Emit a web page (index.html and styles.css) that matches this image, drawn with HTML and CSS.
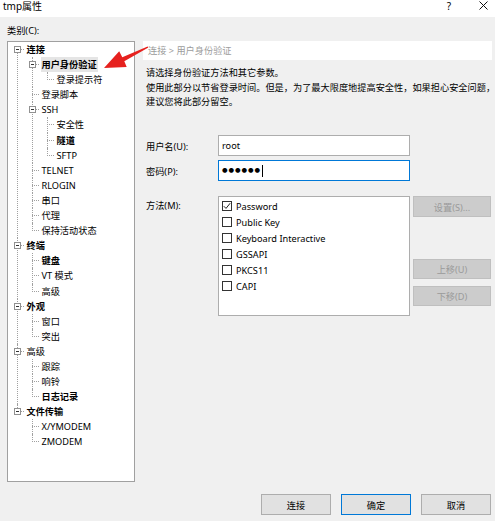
FILE: index.html
```html
<!DOCTYPE html>
<html lang="zh-CN">
<head>
    <meta charset="UTF-8">
    <title>tmp属性</title>
    <link rel="stylesheet" href="styles.css">
</head>
<body>
<div class="window">
    <div class="titlebar">
        <span class="title">tmp属性</span>
        <span class="help">?</span>
        <svg class="close" width="9" height="9" viewBox="0 0 9 9">
            <path d="M0.5 0.5L8.5 8.5M8.5 0.5L0.5 8.5" stroke="#111" stroke-width="1"/>
        </svg>
    </div>

    <div class="content">
        <div class="caption">类别(C):</div>

        <div class="main">
            <div class="tree">
                <ul>
                    <li><i class="exp"></i><span class="node b">连接</span>
                        <ul>
                            <li><i class="exp"></i><span class="node b"><span class="sel">用户身份验证</span></span>
                                <ul>
                                    <li><span class="node">登录提示符</span></li>
                                </ul>
                            </li>
                            <li><span class="node">登录脚本</span></li>
                            <li><i class="exp"></i><span class="node">SSH</span>
                                <ul>
                                    <li><span class="node">安全性</span></li>
                                    <li><span class="node b">隧道</span></li>
                                    <li><span class="node">SFTP</span></li>
                                </ul>
                            </li>
                            <li><span class="node">TELNET</span></li>
                            <li><span class="node">RLOGIN</span></li>
                            <li><span class="node">串口</span></li>
                            <li><span class="node">代理</span></li>
                            <li><span class="node">保持活动状态</span></li>
                        </ul>
                    </li>
                    <li><i class="exp"></i><span class="node b">终端</span>
                        <ul>
                            <li><span class="node b">键盘</span></li>
                            <li><span class="node">VT 模式</span></li>
                            <li><span class="node">高级</span></li>
                        </ul>
                    </li>
                    <li><i class="exp"></i><span class="node b">外观</span>
                        <ul>
                            <li><span class="node">窗口</span></li>
                            <li><span class="node">突出</span></li>
                        </ul>
                    </li>
                    <li><i class="exp"></i><span class="node">高级</span>
                        <ul>
                            <li><span class="node">跟踪</span></li>
                            <li><span class="node">响铃</span></li>
                            <li><span class="node b">日志记录</span></li>
                        </ul>
                    </li>
                    <li><i class="exp"></i><span class="node b">文件传输</span>
                        <ul>
                            <li><span class="node">X/YMODEM</span></li>
                            <li><span class="node">ZMODEM</span></li>
                        </ul>
                    </li>
                </ul>
            </div>

            <div class="page">
                <div class="crumb">连接 &gt; 用户身份验证</div>
                <div class="intro">
                    <p>请选择身份验证方法和其它参数。</p>
                    <p>使用此部分以节省登录时间。但是，为了最大限度地提高安全性，如果担心安全问题，<br>建议您将此部分留空。</p>
                </div>

                <div class="row first">
                    <label class="lbl">用户名(U):</label>
                    <div class="input">root</div>
                </div>
                <div class="row">
                    <label class="lbl">密码(P):</label>
                    <div class="input focus"><span class="dots">●●●●●●</span><span class="caret"></span></div>
                </div>

                <div class="row methods">
                    <label class="lbl">方法(M):</label>
                    <div class="list">
                        <div class="opt">
                            <span class="box">
                                <svg width="8" height="8" viewBox="0 0 8 8"><path d="M0.8 4.2L3 6.4L7.2 1.2" fill="none" stroke="#222" stroke-width="1"/></svg>
                            </span>Password
                        </div>
                        <div class="opt"><span class="box"></span>Public Key</div>
                        <div class="opt"><span class="box"></span>Keyboard Interactive</div>
                        <div class="opt"><span class="box"></span>GSSAPI</div>
                        <div class="opt"><span class="box"></span>PKCS11</div>
                        <div class="opt"><span class="box"></span>CAPI</div>
                    </div>
                    <div class="side">
                        <button class="btn" disabled>设置(S)...</button>
                        <button class="btn up" disabled>上移(U)</button>
                        <button class="btn down" disabled>下移(D)</button>
                    </div>
                </div>
            </div>
        </div>

        <div class="footer">
            <button class="button">连接</button>
            <button class="button default">确定</button>
            <button class="button">取消</button>
        </div>
    </div>

    <!-- red pointer drawn over the tree -->
    <svg class="pointer" width="495" height="521" viewBox="0 0 495 521">
        <polygon points="104,68 126.7,67 124.3,61.2 148.4,47.6 147.6,46.4 122.3,57.3 119.2,51.2" fill="#e6211e"/>
    </svg>
</div>
</body>
</html>
```

FILE: styles.css
```css
* {
    box-sizing: border-box;
}

body {
    margin: 0;
    font: 9.2px "Noto Sans", "Noto Sans CJK SC", sans-serif;
    color: #000;
}

.window {
    position: relative;
    width: 495px;
    height: 521px;
    background: #f0f0f0;
    overflow: hidden;
}

/* title bar */
.titlebar {
    display: flex;
    align-items: flex-start;
    height: 17px;
    background: #fff;
    padding-left: 3px;
}

.title {
    flex: 1;
    font-size: 10px;
    line-height: 12px;
}

.help {
    font-size: 10px;
    line-height: 12px;
    margin-right: 28px;
}

.close {
    margin-top: 1px;
    margin-right: 7px;
}

.content {
    padding: 0 3px 0 7px;
}

.caption {
    height: 14px;
    line-height: 14px;
    margin: 7px 0 3px;
}

.main {
    display: flex;
    gap: 8px;
    height: 441px;
}

/* category tree */
.tree {
    width: 128px;
    height: 441px;
    border: 1px solid #a0a0a0;
    background: #fff;
    overflow: hidden;
}

.tree ul {
    list-style: none;
    margin: 0 0 0 -3.5px;
    padding: 0;
}

.tree > ul {
    margin-left: 0;
}

.tree li {
    position: relative;
    padding-left: 18.5px;
}

.tree li::before {
    content: "";
    position: absolute;
    left: 9px;
    top: 0;
    bottom: 0;
    border-left: 1px dotted #a0a0a0;
}

.tree li:last-child::before {
    bottom: auto;
    height: 8px;
}

.tree > ul > li:first-child::before {
    top: 7px;
}

.tree li::after {
    content: "";
    position: absolute;
    left: 9px;
    top: 7px;
    width: 7px;
    border-top: 1px dotted #a0a0a0;
}

.exp {
    position: absolute;
    left: 6px;
    top: 4px;
    width: 7px;
    height: 7px;
    border: 1px solid #919191;
    background: #fff;
    z-index: 1;
}

.exp::after {
    content: "";
    position: absolute;
    left: 1px;
    top: 2px;
    width: 3px;
    height: 1px;
    background: #333;
}

.node {
    display: block;
    height: 15.1px;
    line-height: 15.1px;
    white-space: nowrap;
}

.b {
    font-weight: bold;
}

.sel {
    background: #e5e5e5;
    padding: 1px 1px;
    margin-left: -1px;
}

/* settings page */
.page {
    width: 349px;
    flex: none;
    white-space: nowrap;
}

.crumb {
    height: 19px;
    line-height: 19px;
    background: #fff;
    color: #9c9c9c;
    padding-left: 5px;
}

.intro {
    margin-top: 6px;
    padding-left: 3px;
    line-height: 14.5px;
}

.intro p {
    margin: 0;
}

.row {
    display: flex;
    align-items: center;
    padding-left: 3px;
    margin-top: 4px;
}

.row.first {
    margin-top: 25.5px;
}

.lbl {
    width: 72px;
    flex: none;
}

.input {
    width: 192px;
    height: 21px;
    line-height: 19px;
    border: 1px solid #adadad;
    background: #fff;
    padding-left: 3px;
    display: flex;
    align-items: center;
}

.input.focus {
    border-color: #0078d7;
}

.dots {
    font-family: "DejaVu Sans", sans-serif;
    font-size: 6.4px;
    letter-spacing: 0.9px;
}

.caret {
    width: 1px;
    height: 12px;
    background: #000;
    margin-left: 1px;
}

.row.methods {
    align-items: flex-start;
    margin-top: 15px;
}

.methods .lbl {
    line-height: 20px;
}

.list {
    width: 192px;
    height: 120px;
    border: 1px solid #adadad;
    background: #fff;
    padding: 1px 3px;
}

.opt {
    display: flex;
    align-items: center;
    gap: 4px;
    height: 16px;
}

.box {
    width: 10px;
    height: 10px;
    border: 1px solid #333;
    background: #fff;
    display: flex;
}

.side {
    display: flex;
    flex-direction: column;
    margin-left: 3px;
}

.btn {
    width: 78px;
    height: 21px;
    padding: 0;
    font: inherit;
    background: #cccccc;
    border: 1px solid #bfbfbf;
    color: #9a9a9a;
}

.btn.up {
    margin-top: 42px;
    height: 20px;
}

.btn.down {
    margin-top: 7px;
    height: 20px;
}

/* dialog buttons */
.footer {
    display: flex;
    justify-content: flex-end;
    gap: 10px;
    margin-top: 12px;
    padding-right: 1px;
}

.button {
    width: 70px;
    height: 21px;
    padding: 0;
    font: inherit;
    background: #e1e1e1;
    border: 1px solid #adadad;
    color: #000;
}

.button.default {
    border-color: #0078d7;
}

.pointer {
    position: absolute;
    left: 0;
    top: 0;
    pointer-events: none;
}
```
